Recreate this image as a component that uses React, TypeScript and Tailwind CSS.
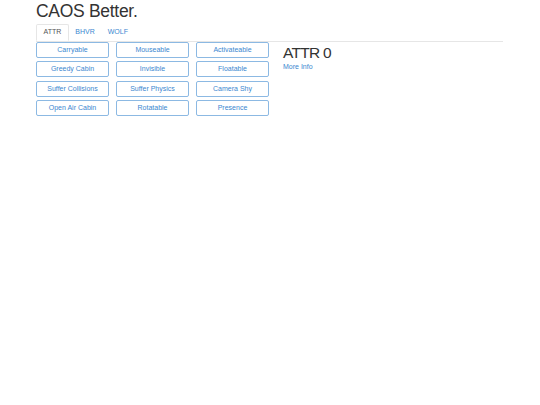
const attrs = [
  'Carryable',
  'Mouseable',
  'Activateable',
  'Greedy Cabin',
  'Invisible',
  'Floatable',
  'Suffer Collisions',
  'Suffer Physics',
  'Camera Shy',
  'Open Air Cabin',
  'Rotatable',
  'Presence',
]

const tabs = ['ATTR', 'BHVR', 'WOLF']

export default function App() {
  return (
    <div
      className="min-h-[405px] w-[540px] bg-white pl-[36px] text-[#333]"
      style={{ fontFamily: '"Liberation Sans", Arial, sans-serif' }}
    >
      <h1 className="text-[17.5px] leading-[22px] tracking-[-0.3px] font-normal">CAOS Better.</h1>
      <div className="mt-[2px] flex w-[467px] border-b border-[#e6e6e6]">
        {tabs.map((t, i) => (
          <div
            key={t}
            className={
              i === 0
                ? '-mb-px flex h-[17px] items-center rounded-t-[2px] border border-b-white border-[#e6e6e6] bg-white px-[6.5px] text-[7px] text-[#555]'
                : 'flex h-[17px] items-center px-[6.5px] text-[7px] text-[#3b87d0]'
            }
          >
            {t}
          </div>
        ))}
      </div>
      <div className="flex gap-[14px]">
        <div className="grid grid-cols-[repeat(3,73px)] gap-x-[7px] gap-y-[3.4px]">
          {attrs.map((a) => (
            <button
              key={a}
              type="button"
              className="flex h-[16px] items-center justify-center rounded-[2px] border border-[#8cb9e3] bg-white text-[7px] text-[#3b87d0]"
            >
              {a}
            </button>
          ))}
        </div>
        <div className="pt-[2px]">
          <h2 className="text-[15.5px] leading-[18px] tracking-[-0.7px] font-normal">ATTR 0</h2>
          <a href="#" className="block text-[7px] leading-[9px] text-[#3b87d0]">
            More Info
          </a>
        </div>
      </div>
    </div>
  )
}
